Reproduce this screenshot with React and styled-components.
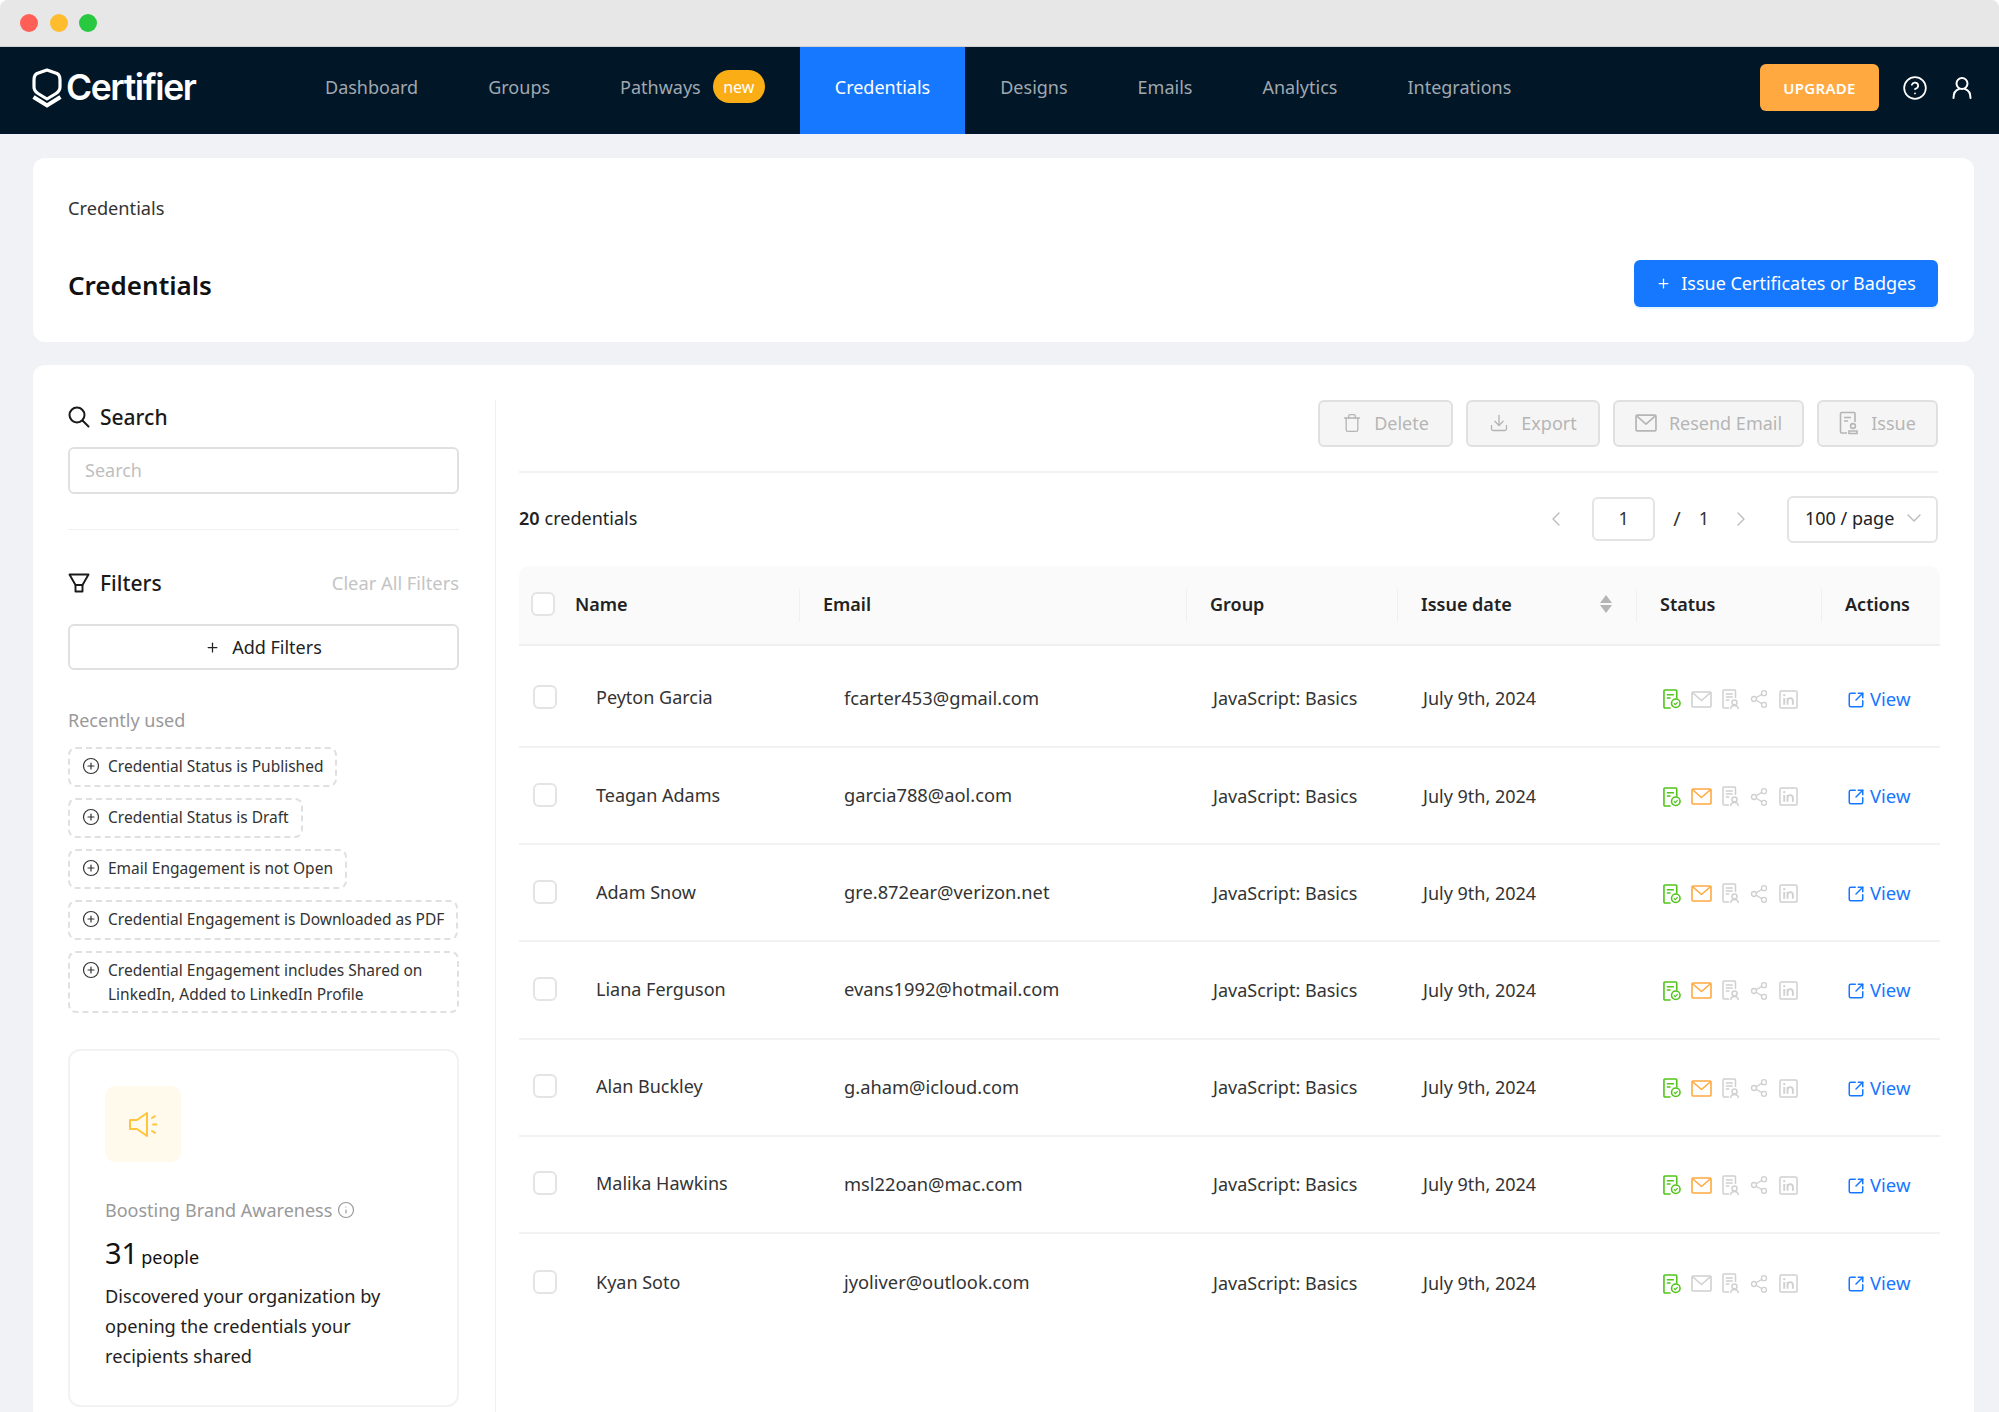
import React from "react";
import styled, { createGlobalStyle } from "styled-components";
import { Trash, Download, CirclePlus, ChevronLeft, ChevronRight, ChevronDown, Share2, Info, CircleHelp, Plus, SquareArrowOutUpRight } from "lucide-react";

const Global = createGlobalStyle`
  html, body { margin: 0; padding: 0; height: 1412px; overflow: hidden; background: #fff; }
  body { font-family: "Noto Sans", "Open Sans", sans-serif; color: #1f1f1f; }
  * { box-sizing: border-box; }
`;

const Win = styled.div`width: 1999px; height: 1412px; display: flex; flex-direction: column; background: #f0f2f5; border-radius: 8px 8px 0 0; overflow: hidden;`;
const TitleBar = styled.div`height: 47px; flex: none; background: #e7e7e7; border-bottom: 1px solid #cfd0d1; display: flex; align-items: center; gap: 11.5px; padding-left: 20px;`;
const Dot = styled.span`width: 18px; height: 18px; border-radius: 50%; background: ${p => p.$c};`;
const Nav = styled.nav`height: 87px; flex: none; background: #011627; display: flex; align-items: stretch; padding-left: 32px; padding-right: 26px;`;
const Logo = styled.div`width: 258px; flex: none; display: flex; align-items: center; gap: 4px; padding-bottom: 6px; color: #fff; font-family: Inter, sans-serif; font-weight: 600; font-size: 35.5px; letter-spacing: -1.4px;`;
const NavItem = styled.div`padding: 0 35px 8px; display: flex; align-items: center; font-size: 18px; color: ${p => p.$active ? "#fff" : "#a0a8b0"}; background: ${p => p.$active ? "#1677ff" : "transparent"}; gap: 12px;`;
const NewBadge = styled.span`width: 52px; height: 33px; border-radius: 17px; background: #faad14; color: #fff; font-size: 16px; display: flex; align-items: center; justify-content: center;`;
const NavRight = styled.div`margin-left: auto; padding-bottom: 6px; display: flex; align-items: center; color: #fff;`;
const Upgrade = styled.button`width: 119px; height: 47px; border: 0; border-radius: 6px; background: #ffa940; color: #fff; font: 600 15px "Noto Sans", sans-serif; margin-right: 23px; letter-spacing: .3px;`;
const IconGap = styled.span`width: 23px;`;
const Content = styled.main`flex: 1; min-height: 0; padding: 24px 25px 0 33px; display: flex; flex-direction: column; gap: 23px;`;
const HeadCard = styled.section`height: 184px; flex: none; background: #fff; border-radius: 12px; padding: 36px 36px 0 35px;`;
const Crumb = styled.div`font-size: 18.2px; line-height: 28px; color: #333;`;
const TitleRow = styled.div`display: flex; justify-content: space-between; align-items: center; margin-top: 36px;`;
const Title = styled.h1`margin: 0; font-size: 26px; font-weight: 600; color: #111; line-height: 50px; position: relative; top: 2px;`;
const Primary = styled.button`width: 304px; height: 47px; border: 0; border-radius: 6px; background: #1677ff; color: #fff; font: 400 18px "Noto Sans", sans-serif; display: flex; align-items: center; justify-content: center; gap: 10px; box-shadow: 0 2px 0 rgba(5,145,255,.1);`;
const BodyCard = styled.section`flex: 1; min-height: 0; background: #fff; border-radius: 12px 12px 0 0; padding: 35px 36px 0 35px; display: grid; grid-template-columns: 428px minmax(0, 1fr);`;
const Side = styled.aside`border-right: 1px solid #f0f0f0; padding-right: 36px;`;
const Heading = styled.div`display: flex; align-items: center; gap: 10px; font-size: 21px; font-weight: 500; color: #1a1a1a; height: 32px; line-height: 32px;`;
const SearchHeading = styled(Heading)`position: relative; top: 1px;`;
const SearchBox = styled.div`height: 47px; border: 2px solid #e0e0e0; border-radius: 6px; margin-top: 15px; padding: 0 15px 2px; display: flex; align-items: center; font-size: 18px; color: #bfbfbf;`;
const Hr = styled.div`height: 1px; background: #f0f0f0; margin: 35px 0 37px;`;
const FilterRow = styled.div`display: flex; justify-content: space-between; align-items: center;`;
const Clear = styled.span`font-size: 18.3px; color: #c4c4c4; padding-bottom: 2px;`;
const AddBtn = styled.div`height: 46px; margin-top: 25px; border: 2px solid #e0e0e0; border-radius: 6px; display: flex; align-items: center; justify-content: center; gap: 12px; font-size: 18px; color: #222;`;
const Recent = styled.div`font-size: 18px; color: #999; margin-top: 36px; line-height: 28px;`;
const Chips = styled.div`display: flex; flex-direction: column; align-items: flex-start; gap: 11px; margin-top: 13px;`;
const Chip = styled.div`border: 2px dashed #e0e0e0; border-radius: 8px; padding: 6px 12px 5px 12px; min-height: 40px; display: flex; gap: 8px; font-size: 15.5px; line-height: 23.5px; color: #333; svg { flex: none; margin-top: 2px; }`;
const Stat = styled.div`height: 358px; margin-top: 36px; border: 2px solid #f2f2f2; border-radius: 12px; padding: 35px 35px 0;`;
const StatIcon = styled.div`width: 76px; height: 76px; background: #fffaeb; border-radius: 10px; display: flex; align-items: center; justify-content: center;`;
const StatLabel = styled.div`margin-top: 34px; display: flex; align-items: center; gap: 5px; font-size: 18px; color: #999; line-height: 28px;`;
const StatNum = styled.div`margin-top: 7px; font-size: 29px; color: #111; line-height: 44px; span { font-size: 18px; margin-left: 3px; }`;
const StatText = styled.div`margin-top: 2px; font-size: 18.2px; line-height: 30px; color: #222;`;
const MainCol = styled.div`padding-left: 23px;`;
const Toolbar = styled.div`display: flex; justify-content: flex-end; gap: 13px; height: 73px; border-bottom: 2px solid #f2f2f2;`;
const Ghost = styled.div`width: ${p => p.$w}px; height: 47px; background: #f5f5f5; border: 2px solid #e0e0e0; border-radius: 6px; padding-bottom: 1px; display: flex; align-items: center; justify-content: center; gap: 12px; font-size: 18px; color: #b5b5b5;`;
const PageRow = styled.div`height: 93px; display: flex; align-items: center; font-size: 18px; color: #222; padding-bottom: 1px; b { font-weight: 600; margin-right: 5px; }`;
const PagerText = styled.span`padding-bottom: 2px;`;
const Pager = styled.div`margin-left: auto; display: flex; align-items: center; color: #333;`;
const PageNum = styled.div`width: 63px; height: 44px; border: 2px solid #e4e4e4; border-radius: 6px; padding-bottom: 2px; display: flex; align-items: center; justify-content: center; margin: 0 18px 0 24px;`;
const Slash = styled(PagerText)`margin-right: 18px; font-size: 20px;`;
const NextGap = styled.span`width: 20px;`;
const PerPage = styled.div`width: 151px; height: 47px; margin-left: 34px; border: 2px solid #e4e4e4; border-radius: 6px; padding: 0 10px 2px 16px; display: flex; align-items: center; justify-content: space-between; color: #222;`;
const cols = "280px 387px 211px 239px 185px 118px";
const THead = styled.div`display: grid; grid-template-columns: ${cols}; height: 80px; background: #fafafa; border-bottom: 2px solid #f0f0f0; border-radius: 10px 10px 0 0; margin-right: -2px;`;
const Th = styled.div`align-self: center; height: 33px; font-size: 18px; font-weight: 600; color: #222; display: flex; align-items: center; ${p => p.$first ? "padding-left: 12px; gap: 20px;" : "border-left: 1px solid #f0f0f0; padding-left: 23px;"} padding-right: 24px; padding-bottom: 1.5px; justify-content: ${p => p.$between ? "space-between" : "flex-start"};`;
const Box = styled.span`display: block; width: 24px; height: 24px; flex: none; background: #fff; border: 2px solid #e4e4e4; border-radius: 6px;`;
const Sorter = styled.span`display: flex; flex-direction: column; gap: 2px;`;
const Caret = styled.span`width: 0; height: 0; border-left: 6.5px solid transparent; border-right: 6.5px solid transparent; ${p => p.$up ? "border-bottom" : "border-top"}: 8px solid #b5b5b5;`;
const Row = styled.div`display: grid; grid-template-columns: ${cols}; height: 97.2px; align-items: center; border-bottom: 2px solid #f2f2f2; margin-right: -2px; font-size: 18px; color: #333; &:first-child { height: 102px; padding-top: 4px; } &:last-child { border-bottom: 0; }`;
const NameCell = styled.div`display: flex; align-items: center; gap: 39px; padding: 0 0 2px 14px;`;
const EmailCell = styled.div`padding: 0 0 2px 45px; font-size: 18.3px;`;
const GroupCell = styled.div`padding-left: 27px;`;
const DateCell = styled.div`padding-left: 26px;`;
const IconCell = styled.div`display: flex; align-items: center; gap: 10px; padding: 2px 0 0 27px;`;
const ViewCell = styled.div`display: flex; align-items: center; gap: 5px; padding-left: 26px; font-size: 18.5px; color: #1677ff; svg { margin-top: 3px; }`;

const ShieldLogo = () => (
  <svg width="30" height="40" viewBox="0 0 30 40" fill="none" stroke="#fff" strokeWidth="3.2">
    <path d="M15 2 L25 5.5 Q28 7 28 12 L28 19 Q28 23 24 25.5 L15 31 L6 25.5 Q2 23 2 19 L2 12 Q2 7 5 5.5 Z" strokeLinejoin="round" />
    <path d="M1.5 29 L15 37.5 L28.5 29" strokeWidth="4" />
  </svg>
);
const SearchGlyph = () => (
  <svg width="22" height="22" viewBox="0 0 22 22" fill="none" stroke="#1a1a1a" strokeWidth="2" strokeLinecap="round">
    <circle cx="9" cy="9" r="7.5" />
    <path d="M14.5 14.500 L20.500 20.500" />
  </svg>
);
const DocCheck = () => (
  <svg width="18" height="20" viewBox="0 0 19 21" fill="none" stroke="#52c41a" strokeWidth="1.700">
    <path d="M8 20 H2 a1 1 0 0 1-1-1 V2 a1 1 0 0 1 1-1 H13.500 a1 1 0 0 1 1 1 V10" />
    <path d="M4 6h7.500M4 9.500h4" />
    <circle cx="13.500" cy="15" r="4.500" />
    <path d="M11.500 15l1.500 1.500 2.400-2.800" strokeWidth="1.200" />
  </svg>
);
const MailBox = ({ c, w = 21, h = 17 }) => (
  <svg width={w} height={h} viewBox="0 0 21 17" fill="none" stroke={c} strokeWidth="1.600" strokeLinejoin="round">
    <rect x="1" y="1" width="19" height="15" rx="1" />
    <path d="M1.300 1.500 L10.500 9.500 L19.700 1.500" />
  </svg>
);
const DocPerson = () => (
  <svg width="17" height="21" viewBox="0 0 17 21" fill="none" stroke="#d0d0d0" strokeWidth="1.500">
    <path d="M7 19 H2 a1 1 0 0 1-1-1 V2 a1 1 0 0 1 1-1 H12.500 a1 1 0 0 1 1 1 V9" />
    <path d="M3.800 5h7M3.800 8h7M3.800 11h3.500" />
    <circle cx="12.500" cy="13.500" r="2.500" />
    <path d="M8.500 20c.4-2.300 2.100-3.400 4-3.400s3.600 1.100 4 3.400" />
  </svg>
);
const DocGhost = () => (
  <svg width="20" height="24" viewBox="0 0 20 24" fill="none" stroke="#b5b5b5" strokeWidth="1.600">
    <path d="M8 22 H2.500 a1 1 0 0 1-1-1 V2.500 a1 1 0 0 1 1-1 H15 a1 1 0 0 1 1 1 V11" />
    <path d="M5 6.500h7M5 10h4" />
    <circle cx="14" cy="15" r="2.400" />
    <path d="M10 22.500v-2.500h8v2.500z" />
  </svg>
);
const LinkedinBox = () => (
  <svg width="19" height="19" viewBox="0 0 20 20" fill="none" stroke="#d0d0d0">
    <rect x="1" y="1" width="18" height="18" rx="1.500" strokeWidth="1.600" />
    <path d="M5.500 8.500V15.500M9 8.500V15.500M9 11.500c0-1.800 1.300-3 2.800-3 1.700 0 2.800 1 2.800 3V15.500" strokeWidth="2" />
    <circle cx="5.500" cy="5.500" r="1.200" fill="#d0d0d0" stroke="none" />
  </svg>
);
const Funnel = () => (
  <svg width="22" height="20" viewBox="0 0 22 20" fill="none" stroke="#1a1a1a" strokeWidth="1.900" strokeLinejoin="round">
    <path d="M1.500 1.500 H20.500 L14.500 12 H7.500 Z" />
    <path d="M7.500 12 V18.500 H14.500 V12" />
  </svg>
);
const User = () => (
  <svg width="22" height="24" viewBox="0 0 22 24" fill="none" stroke="#fff" strokeWidth="2" strokeLinecap="round">
    <circle cx="11" cy="7.500" r="5.500" />
    <path d="M2.500 22c0-4.500 2.500-8 5.500-9M19.500 22c0-4.500-2.500-8-5.500-9" />
  </svg>
);
const Speaker = () => (
  <svg width="30" height="27" viewBox="0 0 30 27" fill="none" stroke="#ffc53d" strokeWidth="2" strokeLinejoin="round" strokeLinecap="round">
    <path d="M2 9 H9 L19 2 V25 L9 18 H2 Z" />
    <path d="M24 7l3-1.800M25 13.500h3.500M24 20l3 1.800" />
  </svg>
);

const people = [
  ["Peyton Garcia", "fcarter453@gmail.com", false],
  ["Teagan Adams", "garcia788@aol.com", true],
  ["Adam Snow", "gre.872ear@verizon.net", true],
  ["Liana Ferguson", "evans1992@hotmail.com", true],
  ["Alan Buckley", "g.aham@icloud.com", true],
  ["Malika Hawkins", "msl22oan@mac.com", true],
  ["Kyan Soto", "jyoliver@outlook.com", false],
];
const chips = [
  "Credential Status is Published",
  "Credential Status is Draft",
  "Email Engagement is not Open",
  "Credential Engagement is Downloaded as PDF",
  "Credential Engagement includes Shared on LinkedIn, Added to LinkedIn Profile",
];

export default function App() {
  return (
    <Win>
      <Global />
      <TitleBar>
        <Dot $c="#ff5f57" /><Dot $c="#febc2e" /><Dot $c="#28c840" />
      </TitleBar>
      <Nav>
        <Logo><ShieldLogo />Certifier</Logo>
        <NavItem>Dashboard</NavItem>
        <NavItem>Groups</NavItem>
        <NavItem>Pathways<NewBadge>new</NewBadge></NavItem>
        <NavItem $active>Credentials</NavItem>
        <NavItem>Designs</NavItem>
        <NavItem>Emails</NavItem>
        <NavItem>Analytics</NavItem>
        <NavItem>Integrations</NavItem>
        <NavRight>
          <Upgrade>UPGRADE</Upgrade>
          <CircleHelp size={26} strokeWidth={1.6} />
          <IconGap />
          <User />
        </NavRight>
      </Nav>
      <Content>
        <HeadCard>
          <Crumb>Credentials</Crumb>
          <TitleRow>
            <Title>Credentials</Title>
            <Primary><Plus size={15} />Issue Certificates or Badges</Primary>
          </TitleRow>
        </HeadCard>
        <BodyCard>
          <Side>
            <SearchHeading><SearchGlyph />Search</SearchHeading>
            <SearchBox>Search</SearchBox>
            <Hr />
            <FilterRow>
              <Heading><Funnel />Filters</Heading>
              <Clear>Clear All Filters</Clear>
            </FilterRow>
            <AddBtn><Plus size={15} />Add Filters</AddBtn>
            <Recent>Recently used</Recent>
            <Chips>
              {chips.map(c => <Chip key={c}><CirclePlus size={18} strokeWidth={1.6} />{c}</Chip>)}
            </Chips>
            <Stat>
              <StatIcon><Speaker /></StatIcon>
              <StatLabel>Boosting Brand Awareness <Info size={18} strokeWidth={1.6} /></StatLabel>
              <StatNum>31<span>people</span></StatNum>
              <StatText>Discovered your organization by opening the credentials your recipients shared</StatText>
            </Stat>
          </Side>
          <MainCol>
            <Toolbar>
              <Ghost $w={135}><Trash size={20} strokeWidth={1.6} />Delete</Ghost>
              <Ghost $w={134}><Download size={20} strokeWidth={1.6} />Export</Ghost>
              <Ghost $w={191}><MailBox c="#b5b5b5" w={22} h={18} />Resend Email</Ghost>
              <Ghost $w={121}><DocGhost />Issue</Ghost>
            </Toolbar>
            <PageRow>
              <PagerText><b>20</b>credentials</PagerText>
              <Pager>
                <ChevronLeft size={24} color="#bbb" strokeWidth={1.4} />
                <PageNum>1</PageNum>
                <Slash>/</Slash>
                <PagerText>1</PagerText>
                <NextGap />
                <ChevronRight size={24} color="#bbb" strokeWidth={1.4} />
                <PerPage>100 / page<ChevronDown size={24} color="#bbb" strokeWidth={1.4} /></PerPage>
              </Pager>
            </PageRow>
            <THead>
              <Th $first><Box />Name</Th>
              <Th>Email</Th>
              <Th>Group</Th>
              <Th $between>Issue date<Sorter><Caret $up /><Caret /></Sorter></Th>
              <Th>Status</Th>
              <Th>Actions</Th>
            </THead>
            <div>
              {people.map(([name, email, opened]) => (
                <Row key={name}>
                  <NameCell><Box />{name}</NameCell>
                  <EmailCell>{email}</EmailCell>
                  <GroupCell>JavaScript: Basics</GroupCell>
                  <DateCell>July 9th, 2024</DateCell>
                  <IconCell>
                    <DocCheck />
                    <MailBox c={opened ? "#ffa940" : "#d0d0d0"} />
                    <DocPerson />
                    <Share2 size={20} strokeWidth={1.6} color="#d0d0d0" />
                    <LinkedinBox />
                  </IconCell>
                  <ViewCell><SquareArrowOutUpRight size={18} strokeWidth={2} />View</ViewCell>
                </Row>
              ))}
            </div>
          </MainCol>
        </BodyCard>
      </Content>
    </Win>
  );
}
